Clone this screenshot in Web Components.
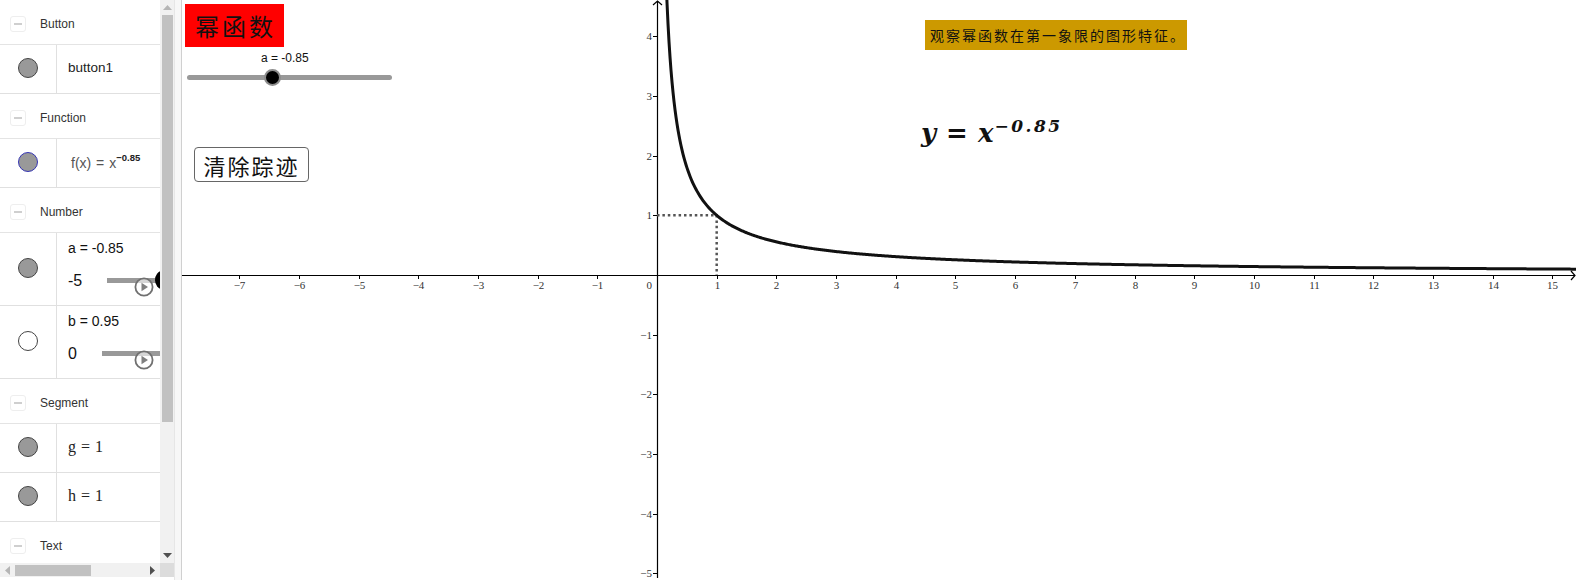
<!DOCTYPE html>
<html>
<head>
<meta charset="utf-8">
<title>幂函数</title>
<style>
  html, body { margin: 0; height: 100%; background: #fff; overflow: hidden; }
</style>
</head>
<body>
<ggb-app>
  <algebra-panel slot="left">
    <algebra-group label="Button"></algebra-group>
    <algebra-row>button1</algebra-row>
    <algebra-group label="Function"></algebra-group>
    <algebra-row outline="#3535b5"><span style="font-size:14px;color:#555;margin-left:3px;margin-top:4px;word-spacing:1px">f(x) = x<sup style="font-size:9.5px;font-weight:bold;color:#222;vertical-align:7px;line-height:0">−0.85</sup></span></algebra-row>
    <algebra-group label="Number"></algebra-group>
    <slider-row name="a = -0.85" min="-5" start="107" thumb="1"></slider-row>
    <slider-row name="b = 0.95" min="0" start="102" fill="#fff"></slider-row>
    <algebra-group label="Segment"></algebra-group>
    <algebra-row><span style="font-family:'Liberation Serif',serif;font-size:16px;word-spacing:1px;margin-top:1px">g = 1</span></algebra-row>
    <algebra-row><span style="font-family:'Liberation Serif',serif;font-size:16px;word-spacing:1px;margin-top:1px">h = 1</span></algebra-row>
    <algebra-group label="Text"></algebra-group>
  </algebra-panel>
  <graphics-view slot="right">
    <canvas-label style="left:3px;top:4px;width:97px;height:43px;padding-left:2px;background:#f00;font-size:24px;letter-spacing:3px">幂函数</canvas-label>
    <canvas-slider style="left:5px;top:51px" label="a = -0.85"></canvas-slider>
    <canvas-label style="left:12px;top:147px;width:113px;height:33px;border:1.5px solid #666;border-radius:4px;font-size:22px;letter-spacing:2px;background:#fff">清除踪迹</canvas-label>
    <canvas-label style="left:743px;top:20px;width:258px;height:30px;padding-left:4px;background:#c90;font-size:14px;letter-spacing:2px">观察幂函数在第一象限的图形特征。</canvas-label>
    <power-formula style="left:739px;top:118px"></power-formula>
  </graphics-view>
</ggb-app>

<script>
const SANS = "'Liberation Sans', sans-serif";
const CJK = "'Liberation Serif', 'Noto Sans CJK SC', serif";

class GgbApp extends HTMLElement {
  constructor() {
    super();
    this.attachShadow({ mode: "open" }).innerHTML = `
<style>
:host { display: flex; width: 100%; height: 580px; background: #fff; }
.left { flex: 0 0 174px; height: 100%; }
.split { flex: 0 0 7px; background: #f7f7f7; border-left: 1px solid #e6e6e6; box-sizing: border-box; }
.right { flex: 1; min-width: 0; height: 100%; border-left: 1px solid #d0d0d0; }
</style>
<div class="left"><slot name="left"></slot></div>
<div class="split"></div>
<div class="right"><slot name="right"></slot></div>`;
  }
}

class AlgebraPanel extends HTMLElement {
  constructor() {
    super();
    this.attachShadow({ mode: "open" }).innerHTML = `
<style>
:host { display: grid; grid-template: 563px 14px 3px / 160px 14px; height: 100%; font-family: ${SANS}; }
.list { overflow: hidden; display: flex; flex-direction: column; }
.vbar { background: #f1f1f1; display: flex; flex-direction: column; align-items: center; }
.vbar .end { flex: 0 0 15px; display: flex; align-items: center; justify-content: center; }
.vbar .thumb { flex: 0 0 407px; width: 11px; background: #c1c1c1; }
.vbar .rest { flex: 1; }
.hbar { background: #f1f1f1; display: flex; align-items: center; }
.hbar .end { flex: 0 0 15px; display: flex; align-items: center; justify-content: center; }
.hbar .thumb { flex: 0 0 76px; height: 11px; background: #c1c1c1; }
.hbar .rest { flex: 1; }
.corner { background: #dcdcdc; }
</style>
<div class="list"><slot></slot></div>
<div class="vbar">
  <div class="end"><svg width="9" height="5"><path d="M0 5L4.5 0L9 5Z" fill="#b5b5b5"/></svg></div>
  <div class="thumb"></div>
  <div class="rest"></div>
  <div class="end"><svg width="9" height="5"><path d="M0 0L4.5 5L9 0Z" fill="#505050"/></svg></div>
</div>
<div class="hbar">
  <div class="end"><svg width="5" height="9"><path d="M5 0L0 4.5L5 9Z" fill="#b5b5b5"/></svg></div>
  <div class="thumb"></div>
  <div class="rest"></div>
  <div class="end"><svg width="5" height="9"><path d="M0 0L5 4.5L0 9Z" fill="#505050"/></svg></div>
</div>
<div class="corner"></div>`;
  }
}

class AlgebraGroup extends HTMLElement {
  constructor() {
    super();
    this.attachShadow({ mode: "open" }).innerHTML = `
<style>
:host { display: flex; flex: 0 0 45px; align-items: center; box-sizing: border-box; height: 45px; padding: 3px 0 0 10px; color: #333; font-size: 12px; border-bottom: 1px solid #e4e4e4; }
:host(:last-child) { border-bottom: 0; }
.toggle { width: 14px; height: 14px; border: 1px solid #eee; border-radius: 3px; display: flex; align-items: center; justify-content: center; margin-right: 14px; }
.toggle i { display: block; width: 8px; height: 2px; background: #cfcfcf; }
</style>
<div class="toggle"><i></i></div><span class="label"></span>`;
  }
  connectedCallback() {
    this.shadowRoot.querySelector(".label").textContent = this.getAttribute("label");
  }
}

class AlgebraRow extends HTMLElement {
  constructor() {
    super();
    this.attachShadow({ mode: "open" }).innerHTML = `
<style>
:host { display: flex; flex: 0 0 49px; box-sizing: border-box; height: 49px; border-bottom: 1px solid #e0e0e0; color: #222; font-size: 13.5px; }
.marble { flex: 0 0 57px; box-sizing: border-box; padding-bottom: 3px; display: flex; align-items: center; justify-content: center; border-right: 1px solid #e0e0e0; }
.marble i { display: block; width: 18px; height: 18px; border-radius: 50%; background: #999; border: 1px solid #444; }
.value { padding: 0 0 4px 11px; display: flex; align-items: center; }
</style>
<div class="marble"><i></i></div><div class="value"><slot></slot></div>`;
  }
  connectedCallback() {
    const outline = this.getAttribute("outline");
    if (outline) this.shadowRoot.querySelector("i").style.borderColor = outline;
  }
}

class SliderRow extends HTMLElement {
  constructor() {
    super();
    this.attachShadow({ mode: "open" }).innerHTML = `
<style>
:host { display: flex; flex: 0 0 73px; box-sizing: border-box; height: 73px; border-bottom: 1px solid #e0e0e0; color: #111; font-size: 14px; }
.marble { flex: 0 0 57px; box-sizing: border-box; padding-bottom: 3px; display: flex; align-items: center; justify-content: center; border-right: 1px solid #e0e0e0; }
.marble i { display: block; width: 18px; height: 18px; border-radius: 50%; background: #999; border: 1px solid #444; }
.body { flex: 1; min-width: 0; position: relative; overflow: hidden; padding: 7px 0 0 11px; }
.min { margin-top: 16px; font-size: 16px; display: flex; align-items: center; }
.track { position: absolute; top: 45px; right: 0; height: 5px; background: #999; }
.thumb { position: absolute; top: 38px; right: -9px; width: 14px; height: 18px; border-radius: 50%; background: #000; }
.play { position: absolute; left: 77px; top: 44px; }
</style>
<div class="marble"><i></i></div>
<div class="body">
  <div class="name"></div>
  <div class="min"></div>
  <div class="track"></div>
  <div class="thumb" hidden></div>
  <svg class="play" width="20" height="20" viewBox="0 0 20 20"><circle cx="10" cy="10" r="8.6" fill="#fff" fill-opacity=".6" stroke="#707070" stroke-width="1.8"/><path d="M7.5 5.8L14 10L7.5 14.2Z" fill="#808080"/></svg>
</div>`;
  }
  connectedCallback() {
    const root = this.shadowRoot;
    root.querySelector(".name").textContent = this.getAttribute("name");
    root.querySelector(".min").textContent = this.getAttribute("min");
    root.querySelector(".track").style.left = (this.getAttribute("start") - 57) + "px";
    root.querySelector("i").style.background = this.getAttribute("fill") || "#999";
    root.querySelector(".thumb").hidden = !this.hasAttribute("thumb");
  }
}

class GraphicsView extends HTMLElement {
  constructor() {
    super();
    this.attachShadow({ mode: "open" }).innerHTML = `
<style>
:host { display: block; position: relative; width: 100%; height: 100%; overflow: hidden; }
svg { position: absolute; left: 0; top: 0; }
text { font-family: 'Liberation Serif', serif; font-size: 11px; fill: #333; }
</style>
<svg width="1394" height="580"></svg>
<slot></slot>`;
  }
  connectedCallback() {
    // origin and scale read off the reference
    const ox = 475, oy = 275, unit = 59.69, w = 1394;
    let s = "";
    for (let i = -7; i <= 15; i++) {
      if (i === 0) continue;
      const x = Math.round(ox + i * unit);
      s += `<path d="M${x + .5} ${oy}v4" stroke="#000"/>`;
      s += `<text x="${x + .5}" y="${oy + 14}" text-anchor="middle">${i < 0 ? "−" + -i : i}</text>`;
    }
    s += `<text x="${ox - 5}" y="${oy + 14}" text-anchor="end">0</text>`;
    for (let i = -5; i <= 4; i++) {
      if (i === 0) continue;
      const y = Math.round(oy - i * unit);
      s += `<path d="M${ox - 4} ${y + .5}h4" stroke="#000"/>`;
      s += `<text x="${ox - 5}" y="${y + 4}" text-anchor="end">${i < 0 ? "−" + -i : i}</text>`;
    }
    // axes with open arrow heads
    s += `<path d="M0 ${oy + .5}H${w - 1}M${w - 5} ${oy - 4}L${w - 1} ${oy + .5}L${w - 5} ${oy + 5}" fill="none" stroke="#000" stroke-width="1.2"/>`;
    s += `<path d="M${ox + .5} 578V1M${ox - 4} 5L${ox + .5} 1L${ox + 5} 5" fill="none" stroke="#000" stroke-width="1.2"/>`;
    // dotted guides to (1,1)
    s += `<path d="M${ox} ${oy - unit}H${ox + unit}V${oy}" fill="none" stroke="#555" stroke-width="2.5" stroke-dasharray="2.5 2.9"/>`;
    // y = x^-0.85
    const pts = [];
    for (let px = 8; px <= w - ox; px += 1) {
      const x = px / unit;
      pts.push((ox + px) + " " + (oy - unit * Math.pow(x, -0.85)).toFixed(2));
    }
    s += `<path d="M${pts.join("L")}" fill="none" stroke="#111" stroke-width="3"/>`;
    this.shadowRoot.querySelector("svg").innerHTML = s;
  }
}

class CanvasLabel extends HTMLElement {
  constructor() {
    super();
    this.attachShadow({ mode: "open" }).innerHTML = `
<style>
:host { position: absolute; display: flex; align-items: center; justify-content: center; font-family: ${CJK}; color: #111; white-space: nowrap; }
</style><slot></slot>`;
  }
}

class CanvasSlider extends HTMLElement {
  constructor() {
    super();
    this.attachShadow({ mode: "open" }).innerHTML = `
<style>
:host { position: absolute; display: block; width: 205px; height: 40px; font-family: ${SANS}; }
.label { position: absolute; left: 74px; top: 0; font-size: 12px; color: #111; white-space: nowrap; }
.track { position: absolute; left: 0; right: 0; top: 24px; height: 5px; border-radius: 3px; background: #999; }
.thumb { position: absolute; left: 77px; top: 18px; width: 13px; height: 13px; border: 2.5px solid #8c8c8c; border-radius: 50%; background: #000; }
</style>
<div class="label"></div><div class="track"></div><div class="thumb"></div>`;
  }
  connectedCallback() {
    this.shadowRoot.querySelector(".label").textContent = this.getAttribute("label");
  }
}

class PowerFormula extends HTMLElement {
  constructor() {
    super();
    this.attachShadow({ mode: "open" }).innerHTML = `
<style>
:host { position: absolute; display: block; font: italic bold 26px 'DejaVu Serif', serif; color: #111; white-space: nowrap; }
.eq { font-style: normal; margin: 0 10px; }
sup { font-size: 17px; letter-spacing: 2.5px; vertical-align: 10px; line-height: 0; margin-left: 1px; }
</style>
y<span class="eq">=</span>x<sup>−0.85</sup>`;
  }
}

customElements.define("ggb-app", GgbApp);
customElements.define("algebra-panel", AlgebraPanel);
customElements.define("algebra-group", AlgebraGroup);
customElements.define("algebra-row", AlgebraRow);
customElements.define("slider-row", SliderRow);
customElements.define("graphics-view", GraphicsView);
customElements.define("canvas-label", CanvasLabel);
customElements.define("canvas-slider", CanvasSlider);
customElements.define("power-formula", PowerFormula);
</script>
</body>
</html>
